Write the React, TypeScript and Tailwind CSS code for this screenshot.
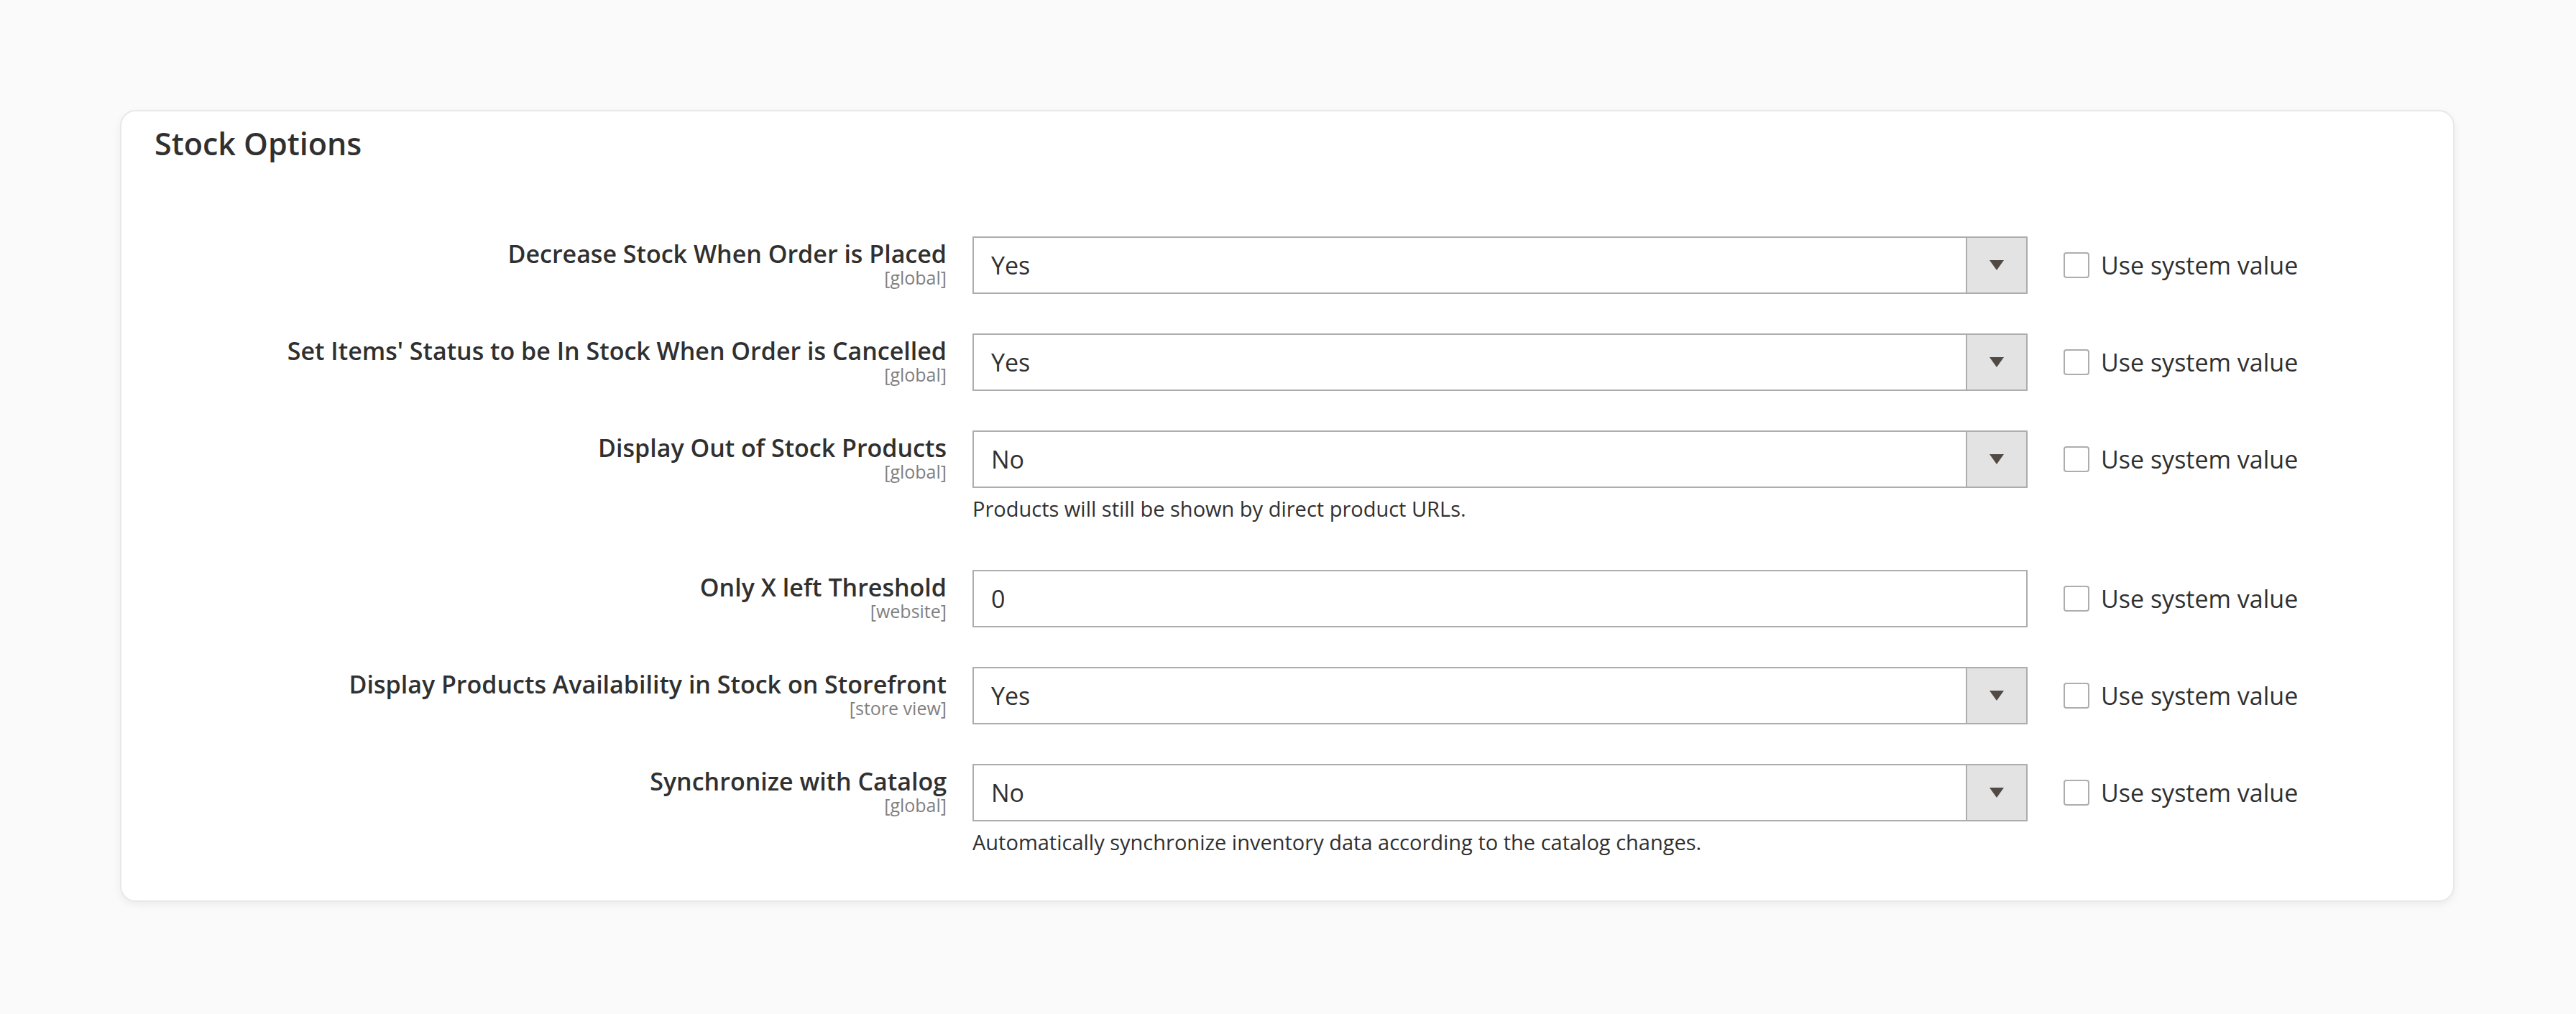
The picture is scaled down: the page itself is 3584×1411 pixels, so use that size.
const rows = [
  { label: "Decrease Stock When Order is Placed", scope: "[global]", value: "Yes", select: true },
  { label: "Set Items' Status to be In Stock When Order is Cancelled", scope: "[global]", value: "Yes", select: true },
  { label: "Display Out of Stock Products", scope: "[global]", value: "No", select: true, note: "Products will still be shown by direct product URLs." },
  { label: "Only X left Threshold", scope: "[website]", value: "0", select: false },
  { label: "Display Products Availability in Stock on Storefront", scope: "[store view]", value: "Yes", select: true },
  { label: "Synchronize with Catalog", scope: "[global]", value: "No", select: true, note: "Automatically synchronize inventory data according to the catalog changes." },
];

function Row({ r }: { r: (typeof rows)[number] }) {
  return (
    <div className="flex items-start">
      <div className="w-[1148px] shrink-0 pt-[4px] text-right">
        <div className="text-[34px] font-semibold leading-[40px] text-[#303030]">{r.label}</div>
        <div className="text-[25px] leading-[26px] text-[#808080]">{r.scope}</div>
      </div>
      <div className="ml-[36px] w-[1468px] shrink-0">
        <div className="flex h-[80px] items-stretch border-2 border-[#adadad] bg-white">
          <div className="flex flex-1 items-center pl-[24px] text-[34px] text-[#303030]">{r.value}</div>
          {r.select && (
            <div className="flex w-[84px] items-center justify-center border-l-2 border-[#adadad] bg-[#e3e3e3]">
              <svg width="20" height="14" viewBox="0 0 20 14">
                <path d="M0 0h20L10 14z" fill="#514943" />
              </svg>
            </div>
          )}
        </div>
        {r.note && <div className="mb-[14px] mt-[13px] text-[29px] leading-[32px] text-[#303030]">{r.note}</div>}
      </div>
      <div className="ml-[50px] flex h-[80px] items-center gap-[16px]">
        <div className="h-[36px] w-[36px] rounded-[4px] border-2 border-[#adadad] bg-white" />
        <span className="text-[34px] text-[#303030]">Use system value</span>
      </div>
    </div>
  );
}

export default function App() {
  return (
    <div className="min-h-[1411px] bg-[#fafafa] px-[167px] pt-[153px]" style={{ fontFamily: '"Open Sans", sans-serif' }}>
      <div className="h-[1102px] w-[3248px] rounded-[22px] border-2 border-[#e8e8e8] bg-white shadow-[0_4px_12px_rgba(0,0,0,0.06)]">
        <div className="px-[46px] pt-[20px] text-[43px] font-semibold leading-[50px] text-[#303030]">Stock Options</div>
        <div className="mt-[104px] flex flex-col gap-[55px]">
          {rows.map((r) => (
            <Row key={r.label} r={r} />
          ))}
        </div>
      </div>
    </div>
  );
}
